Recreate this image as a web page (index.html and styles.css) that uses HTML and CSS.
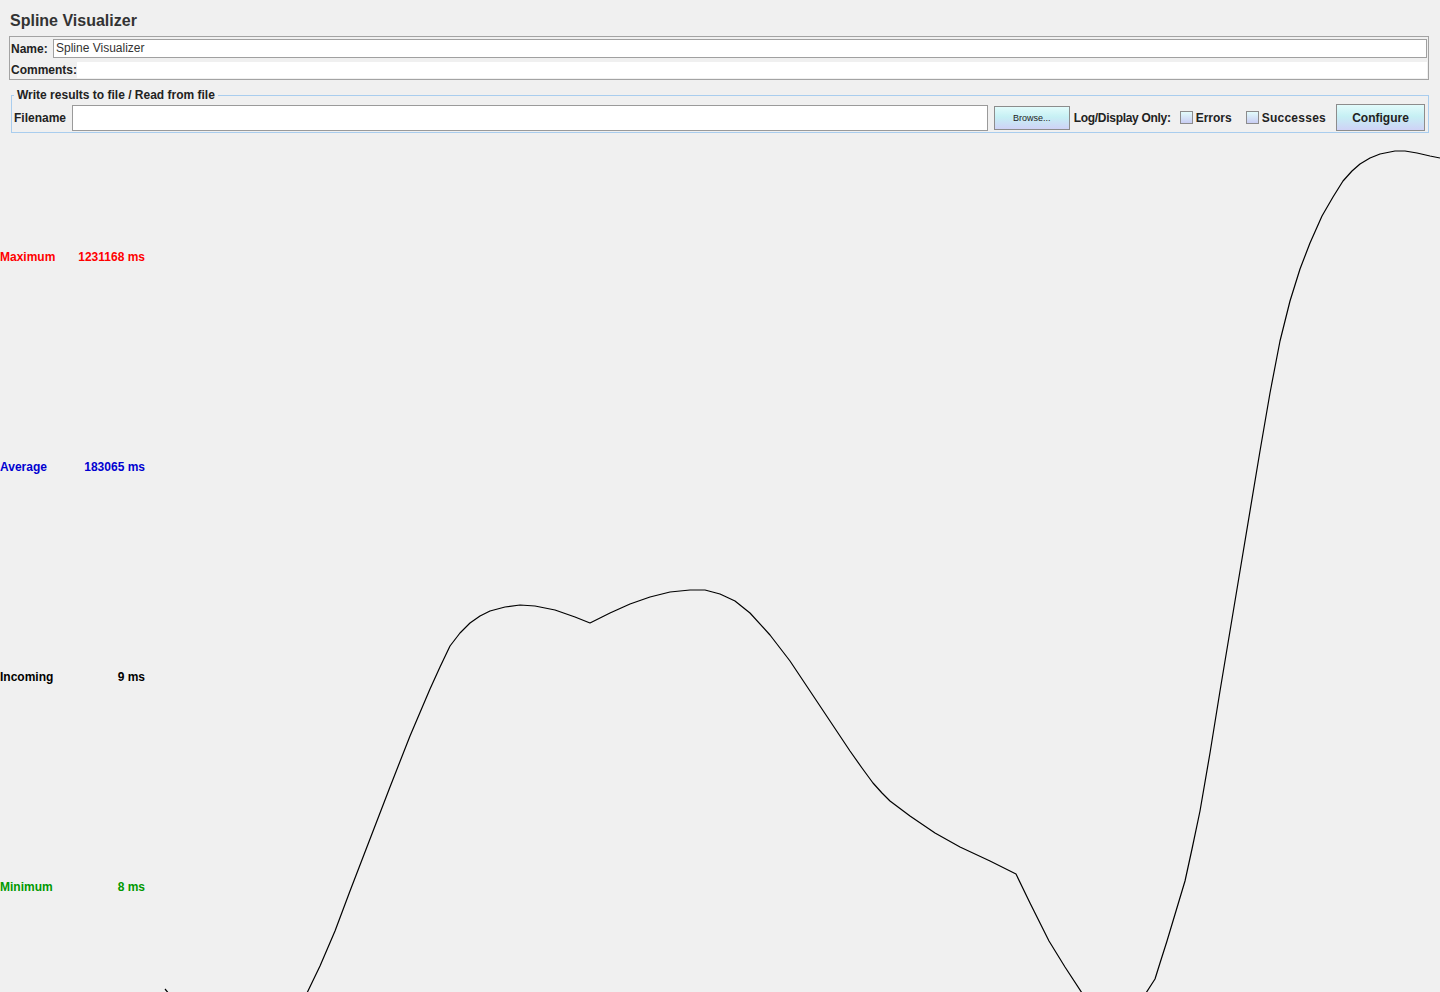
FILE: index.html
```html
<!DOCTYPE html>
<html>
<head>
<meta charset="utf-8">
<link rel="stylesheet" href="styles.css">
</head>
<body>
<div class="page">
  <div class="title">Spline Visualizer</div>
  <div class="namebox">
    <div class="row name-row">
      <span class="lbl">Name:</span>
      <div class="field name-field">Spline Visualizer</div>
    </div>
    <div class="row comments-row">
      <span class="lbl">Comments:</span>
      <div class="comments-field"></div>
    </div>
  </div>
  <fieldset class="filebox">
    <legend>Write results to file / Read from file</legend>
    <div class="file-row">
      <span class="lbl">Filename</span>
      <div class="field file-field"></div>
      <button class="btn browse">Browse...</button>
      <span class="lbl log-lbl">Log/Display Only:</span>
      <span class="check"></span>
      <span class="lbl chk-lbl">Errors</span>
      <span class="check check2"></span>
      <span class="lbl chk-lbl succ-lbl">Successes</span>
      <button class="btn configure">Configure</button>
    </div>
  </fieldset>
  <div class="graph">
    <div class="legend-col">
      <div class="stat max"><span>Maximum</span><span>1231168 ms</span></div>
      <div class="stat avg"><span>Average</span><span>183065 ms</span></div>
      <div class="stat inc"><span>Incoming</span><span>9 ms</span></div>
      <div class="stat min"><span>Minimum</span><span>8 ms</span></div>
    </div>
    <svg class="plot" viewBox="150 136 1290 856" width="1290" height="856" preserveAspectRatio="none">
      <polyline fill="none" stroke="#000" stroke-width="1.2" stroke-linejoin="round" points="165,988 175,1000 200,1030 240,1050 280,1040 300,1010 307,992 320,965 335,930 350,890 370,838 390,786 410,735 430,688 440,666 450,645 460,632 470,622 480,615 490,610 505,606 520,604 535,605 555,609 575,616 590,622 610,612 630,603 650,596 670,591 690,589 705,589 720,593 735,600 750,612 770,634 790,660 810,690 830,720 850,750 862,767 873,782 882,792 890,800 910,815 935,832 960,846 990,860 1016,873 1030,902 1049,940 1065,966 1082,992 1100,1010 1125,1012 1146,992 1155,978 1160,962 1167,940 1176,910 1185,880 1192,848 1200,810 1210,752 1220,690 1240,570 1260,450 1270,392 1280,340 1290,300 1300,268 1310,242 1322,215 1333,196 1343,180 1352,170 1360,163 1370,157 1380,153 1395,150 1405,150 1417,152 1430,155 1440,157"/>
    </svg>
  </div>
</div>
</body>
</html>
```
FILE: styles.css
```css
html, body {
  margin: 0;
  padding: 0;
  background: #f0f0f0;
}
body {
  width: 1440px;
  height: 992px;
  overflow: hidden;
  font-family: "Liberation Sans", Arial, sans-serif;
  font-size: 12px;
  color: #333;
}
.page {
  display: flex;
  flex-direction: column;
}
.title {
  padding: 12px 10px 0;
  font-size: 16px;
  font-weight: bold;
  line-height: 18px;
  color: #333;
}
.namebox {
  margin: 6px 11px 0 9px;
  border: 1px solid #a3a3a3;
  height: 44px;
  box-sizing: border-box;
  display: flex;
  flex-direction: column;
  padding: 2px 1px 0 1px;
}
.row {
  display: flex;
  align-items: center;
}
.lbl {
  font-weight: bold;
  color: #222;
  white-space: nowrap;
}
.name-row {
  height: 19px;
}
.name-row .lbl {
  width: 42px;
}
.field {
  background: #fff;
  border: 1px solid #a0a0a0;
  box-sizing: border-box;
}
.name-field {
  flex: 1;
  height: 19px;
  line-height: 17px;
  padding-left: 2px;
  color: #333;
  font-weight: normal;
}
.comments-row {
  margin-top: 4px;
  height: 16px;
}
.comments-row .lbl {
  width: 66px;
}
.comments-field {
  flex: 1;
  height: 16px;
  background: #fff;
}
.filebox {
  margin: 8px 11px 0 11px;
  padding: 0 2px 1px 2px;
  border: 1px solid #a9cdee;
  min-width: 0;
}
.filebox legend {
  padding: 0 3px;
  font-weight: bold;
  line-height: 14px;
  color: #222;
}
.file-row {
  display: flex;
  align-items: center;
  height: 27px;
  padding-top: 2px;
  padding-right: 1px;
}
.file-field {
  flex: 1;
  height: 26px;
  margin-left: 6px;
  border-color: #9a9a9a;
}
.btn {
  font-family: "Liberation Sans", Arial, sans-serif;
  border: 1px solid #8c8c8c;
  background: linear-gradient(#e2fbfb 0%, #c6f0f4 45%, #cfd2f6 100%);
  color: #222;
  padding: 0;
  box-sizing: border-box;
}
.browse {
  width: 76px;
  height: 24px;
  margin-left: 6px;
  font-size: 9px;
}
.log-lbl {
  margin-left: 4px;
  letter-spacing: -0.3px;
}
.check {
  width: 13px;
  height: 13px;
  box-sizing: border-box;
  border: 1px solid #8c8c8c;
  background: linear-gradient(#e2fbfb, #c9cdf3);
  margin-left: 9px;
}
.check2 {
  margin-left: 14px;
}
.chk-lbl {
  margin-left: 3px;
}
.succ-lbl {
  letter-spacing: 0.25px;
}
.configure {
  width: 89px;
  height: 27px;
  margin-left: 10px;
  font-size: 12px;
  font-weight: bold;
}
.graph {
  display: flex;
  height: 856px;
  margin-top: 4px;
}
.legend-col {
  width: 150px;
  display: flex;
  flex-direction: column;
  padding-top: 113px;
  gap: 196px;
}
.stat {
  width: 145px;
  display: flex;
  justify-content: space-between;
  font-weight: bold;
  line-height: 14px;
  height: 14px;
}
.max { color: #ff0000; }
.avg { color: #0000d0; }
.inc { color: #000; }
.min { color: #009900; }
.plot {
  display: block;
  flex: none;
}
```
